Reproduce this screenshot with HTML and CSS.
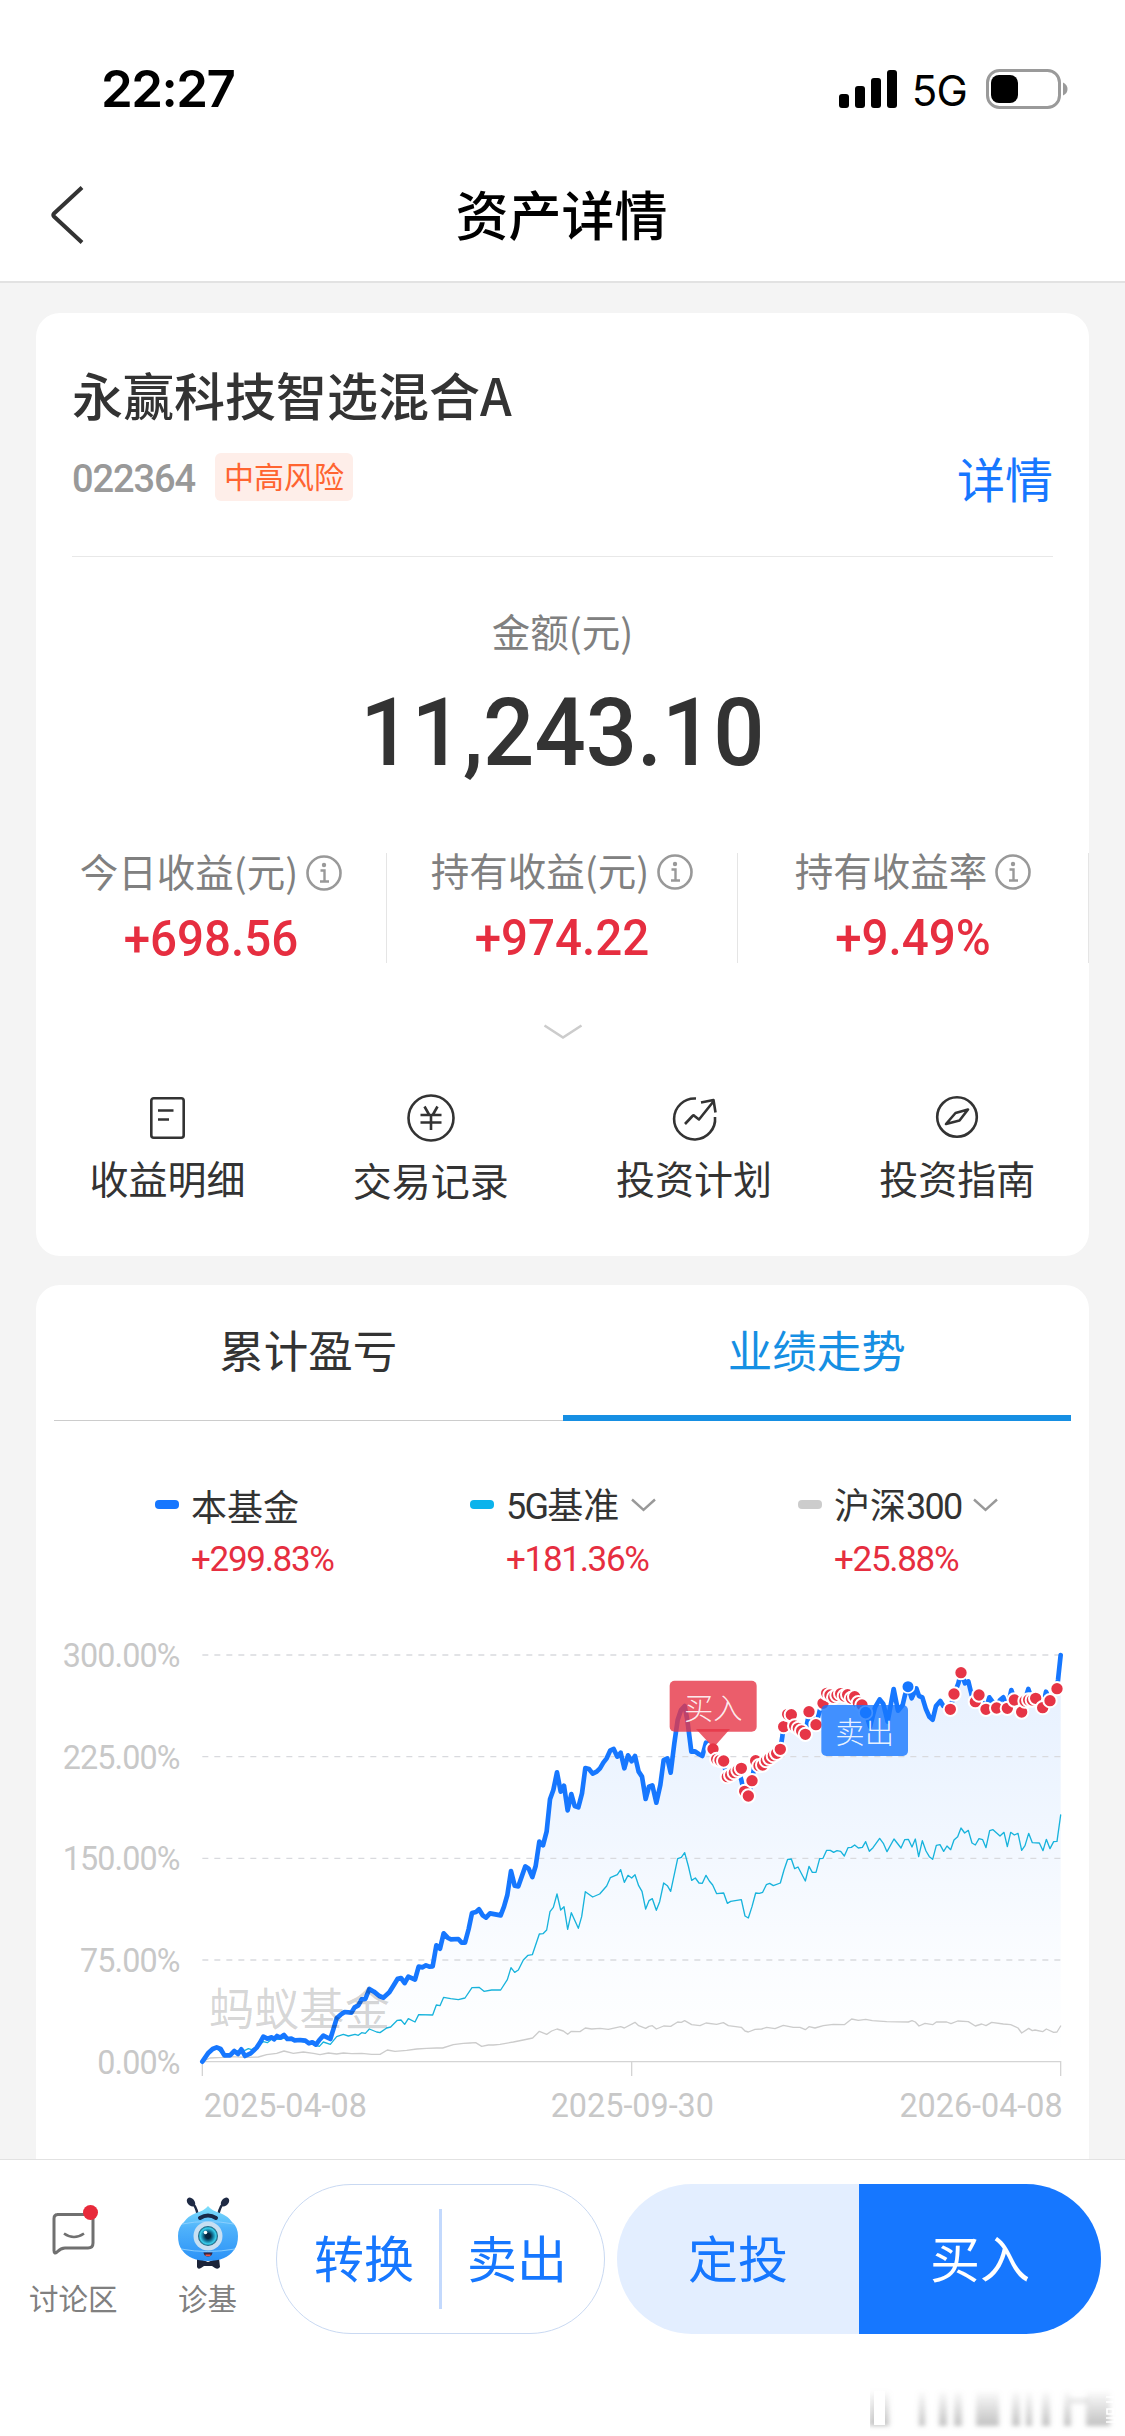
FILE: index.html
```html
<!DOCTYPE html>
<html lang="zh-CN">
<head>
	<meta charset="UTF-8">
	<title>资产详情</title>
	<link rel="stylesheet" href="styles.css">
</head>
<body>
	<div class="status">
		<span class="time">22:27</span>
		<svg class="signal" width="58" height="38" viewBox="0 0 58 38">
			<rect x="0" y="24" width="10" height="14" rx="3"/>
			<rect x="16" y="16" width="10" height="22" rx="3"/>
			<rect x="32" y="8" width="10" height="30" rx="3"/>
			<rect x="48" y="0" width="10" height="38" rx="3"/>
		</svg>
		<span class="net">5G</span>
		<svg class="battery" width="82" height="40" viewBox="0 0 82 40">
			<rect x="1.5" y="1.5" width="72" height="37" rx="12" fill="none" stroke="#9a9a9a" stroke-width="3"/>
			<rect x="5" y="6" width="27" height="28" rx="8"/>
			<path d="M77 13.500q4.500 2 4.500 6.500t-4.500 6.500z" fill="#9a9a9a"/>
		</svg>
	</div>
	<div class="nav">
		<svg class="back" width="36" height="58" viewBox="0 0 36 58"><path d="M33 1.500L5 27.500q-1.500 1.500 0 3L33 56.500" fill="none" stroke="#333" stroke-width="4"/></svg>
		<h1>资产详情</h1>
	</div>

	<div class="main">
		<div class="card asset">
			<div class="head">
				<h2>永赢科技智选混合A</h2>
				<div class="info">
					<span class="code">022364</span>
					<span class="risk">中高风险</span>
					<a class="detail">详情</a>
				</div>
			</div>
			<p class="label amount-label">金额(元)</p>
			<p class="amount">11,243.10</p>
			<div class="stats">
				<div class="stat first">
					<p class="label">今日收益(元)<svg class="tip" viewBox="0 0 36 36"><use href="#tip"/></svg></p>
					<p class="num">+698.56</p>
				</div>
				<div class="stat">
					<p class="label">持有收益(元)<svg class="tip" viewBox="0 0 36 36"><use href="#tip"/></svg></p>
					<p class="num">+974.22</p>
				</div>
				<div class="stat">
					<p class="label">持有收益率<svg class="tip" viewBox="0 0 36 36"><use href="#tip"/></svg></p>
					<p class="num">+9.49%</p>
				</div>
			</div>
			<svg class="more" width="40" height="16" viewBox="0 0 40 16"><path d="M1.500 1.500L20 13.500L38.500 1.500" fill="none" stroke="#ccc" stroke-width="2.600"/></svg>
			<div class="actions">
				<div class="action">
					<svg viewBox="0 0 48 48">
						<rect x="7.300" y="4.300" width="32.400" height="39.400" rx="2.500"/>
						<path d="M14 16.500h15.500M14 25.500h11"/>
					</svg>
					<p>收益明细</p>
				</div>
				<div class="action lower">
					<svg viewBox="0 0 48 48">
						<circle cx="24" cy="24" r="22.500"/>
						<path d="M17.500 12.500L22 20.500M30.500 12.500L26 20.500M13.500 21H34.500M13.500 28.500H34.500M24 21V36"/>
					</svg>
					<p>交易记录</p>
				</div>
				<div class="action">
					<svg viewBox="0 0 48 48">
						<path d="M26 4.500A20.500 20.500 0 1 0 45 23M15 30L22.500 22Q23.500 21 24.500 22L29 25.500L43 8M31 8.500L43.500 6L45.500 18.500"/>
					</svg>
					<p>投资计划</p>
				</div>
				<div class="action">
					<svg viewBox="0 0 48 48">
						<circle cx="24" cy="23" r="19.800"/>
						<path d="M35 15.500L22.500 19L13 30L26.500 26.500Z"/>
					</svg>
					<p>投资指南</p>
				</div>
			</div>
		</div>

		<div class="card trend">
			<div class="tabs">
				<div class="tab">累计盈亏</div>
				<div class="tab on">业绩走势</div>
			</div>
			<div class="legend">
				<div class="item fund">
					<p class="name"><i></i>本基金</p>
					<p class="rate">+299.83%</p>
				</div>
				<div class="item base">
					<p class="name"><i></i><span><b>5G</b>基准</span><svg viewBox="0 0 25 14"><path d="M1 1.500L12.500 12L24 1.500"/></svg></p>
					<p class="rate">+181.36%</p>
				</div>
				<div class="item hs">
					<p class="name"><i></i><span>沪深<b>300</b></span><svg viewBox="0 0 25 14"><path d="M1 1.500L12.500 12L24 1.500"/></svg></p>
					<p class="rate">+25.88%</p>
				</div>
			</div>
			<svg class="chart" width="1053" height="559" viewBox="-432 -60 3159 1677">
				<defs>
					<linearGradient id="fill" gradientUnits="userSpaceOnUse" x1="0" y1="105" x2="0" y2="1325">
						<stop offset="0" stop-color="#1677ff" stop-opacity=".11"/>
						<stop offset=".35" stop-color="#1677ff" stop-opacity=".07"/>
						<stop offset=".75" stop-color="#1677ff" stop-opacity=".02"/>
						<stop offset="1" stop-color="#1677ff" stop-opacity="0"/>
					</linearGradient>
				</defs>
				<path id="area" fill="url(#fill)"/>
				<path class="grid" d="M67 105H2642M67 410H2642M67 715H2642M67 1020H2642"/>
				<path class="axis" d="M67 1368V1325H2642V1368M1355 1325V1368"/>
				<g class="ytext">
					<text x="-1" y="141">300.00%</text>
					<text x="-1" y="446">225.00%</text>
					<text x="-1" y="751">150.00%</text>
					<text x="-1" y="1056">75.00%</text>
					<text x="-1" y="1361">0.00%</text>
				</g>
				<g class="xtext">
					<text x="71" y="1490">2025-04-08</text>
					<text x="1357" y="1490" text-anchor="middle">2025-09-30</text>
					<text x="2648" y="1490" text-anchor="end">2026-04-08</text>
				</g>
				<path id="hs" class="line"/>
				<path id="base" class="line"/>
				<path id="fund" class="line"/>
				<text class="mark" x="86" y="1218">蚂蚁基金</text>
				<g id="dots" transform="translate(1320 0)"></g>
				<g transform="translate(1320 0)">
					<rect class="buy" x="149" y="182" width="261" height="153" rx="15"/>
					<path class="buy" d="M228 327H330L288 374Q280 382 272 374Z"/>
					<text class="pin" x="280" y="297">买入</text>
					<rect class="sell" x="604" y="255" width="260" height="153" rx="15"/>
					<text class="pin" x="734" y="370">卖出</text>
					<circle class="sold" cx="864" cy="200" r="19"/>
				</g>
			</svg>
		</div>
	</div>

	<div class="bar">
		<div class="entry talk">
			<svg width="48" height="50" viewBox="0 0 48 50">
				<path d="M6 9.500H37Q42 9.500 42 14.500V38Q42 43 37 43H14Q10 43 6 47Q3 49.500 3 45.500V13.500Q3 9.500 7 9.500Z" fill="#fff" stroke="#707070" stroke-width="3"/>
				<path d="M13 28.500Q23 35.500 33 28.500" fill="none" stroke="#707070" stroke-width="2.600"/>
				<circle cx="39.500" cy="7.500" r="7.500" fill="#e8293a"/>
			</svg>
			<p>讨论区</p>
		</div>
		<div class="entry ant">
			<svg width="62" height="74" viewBox="0 0 62 74">
				<defs>
					<linearGradient id="skin" x1="0" y1="0" x2="0" y2="1">
						<stop offset="0" stop-color="#7fe0fb"/>
						<stop offset=".4" stop-color="#4fb2fb"/>
						<stop offset="1" stop-color="#2b92f7"/>
					</linearGradient>
					<radialGradient id="iris">
						<stop offset=".25" stop-color="#08263f"/>
						<stop offset=".5" stop-color="#137195"/>
						<stop offset=".8" stop-color="#3bd0ee"/>
						<stop offset="1" stop-color="#134a66"/>
					</radialGradient>
				</defs>
				<path d="M20.500 17Q19 9 14.500 5M41.500 17Q43 9 47.500 5" fill="none" stroke="#1f2a44" stroke-width="2.400"/>
				<ellipse cx="14" cy="5" rx="3.500" ry="5" transform="rotate(-40 14 5)" fill="#1f2a44"/>
				<ellipse cx="48" cy="5" rx="3.500" ry="5" transform="rotate(40 48 5)" fill="#1f2a44"/>
				<path d="M20 61Q24 62 31 65Q38 62 42 61L43 70Q41 73 38 71L35 69H27L24 71Q21 73 20 70Z" fill="#1b2338"/>
				<path d="M31 9Q35 14 43 16Q51 19 55 25Q61 30 61 39Q61 48 57 53Q49 64 31 64Q13 64 5 53Q1 48 1 39Q1 30 7 25Q11 19 19 16Q27 14 31 9Z" fill="url(#skin)"/>
				<path d="M5 27Q30 22 57 27M4 52Q30 57 58 52" fill="none" stroke="#8ed0ff" stroke-width=".9"/>
				<path d="M23 21Q31 16 39 21" fill="none" stroke="#182848" stroke-width="4" stroke-linecap="round"/>
				<circle cx="31" cy="39" r="14.500" fill="#c7dff2"/>
				<circle cx="31" cy="39" r="10" fill="url(#iris)"/>
				<circle cx="28.500" cy="35.500" r="1.800" fill="#fff"/>
				<path d="M26.500 55.500H35.500Q35 59.500 31 59.500T26.500 55.500Z" fill="#3a2740"/>
				<path d="M28.500 58.300h5" stroke="#f0564d" stroke-width="1.600"/>
			</svg>
			<p>诊基</p>
		</div>
		<div class="pill out"><span>转换</span><i></i><span>卖出</span></div>
		<div class="pill"><span class="plan">定投</span><span class="in">买入</span></div>
		<svg class="stamp" width="250" height="44" viewBox="0 0 250 44">
			<defs>
				<filter id="soft" x="-10%" y="-30%" width="120%" height="160%"><feGaussianBlur stdDeviation="2.500 2"/></filter>
				<linearGradient id="ink" x1="0" y1="0" x2="0" y2="1">
					<stop offset="0" stop-color="#999" stop-opacity=".05"/>
					<stop offset="1" stop-color="#999" stop-opacity=".6"/>
				</linearGradient>
			</defs>
			<g fill="url(#ink)" filter="url(#soft)">
				<rect x="-1" y="4" width="20" height="34"/>
				<rect x="49" y="4" width="6" height="34"/><rect x="69" y="4" width="8" height="34"/><rect x="84" y="4" width="8" height="34"/>
				<rect x="106" y="4" width="23" height="34"/><rect x="142" y="4" width="8" height="34"/><rect x="156" y="4" width="6" height="34"/>
				<rect x="172" y="4" width="8" height="34"/><rect x="194" y="4" width="7" height="34"/><rect x="200" y="10" width="18" height="6" fill="#999" opacity=".2"/>
				<rect x="216" y="4" width="24" height="34"/>
			</g>
			<path d="M4 3H15V37H4Z" fill="#fff"/>
			<path d="M236 9h8M236 14h7M237 21h6v5h-6zM236 34h9v-4h-9" fill="none" stroke="#fff" stroke-width="1.600"/>
		</svg>
	</div>

	<svg width="0" height="0" class="defs">
		<symbol id="tip" viewBox="0 0 36 36">
			<circle cx="18" cy="18" r="16.500" fill="none" stroke="#999" stroke-width="2.600"/>
			<circle cx="18" cy="10" r="2.200" fill="#999"/>
			<path d="M14.500 15.500H18.500V26.500M14 26.500H23" fill="none" stroke="#999" stroke-width="2.400"/>
		</symbol>
	</svg>
	<script src="chart.js"></script>
</body>
</html>
```
FILE: styles.css
```css
* {
	box-sizing: border-box;
	padding: 0;
	margin: 0;
}

body {
	width: 1125px;
	height: 2436px;
	overflow: hidden;
	background: #f4f4f4;
	color: #333;
	font-family: "Noto Sans CJK SC", sans-serif;
}

svg {
	display: block;
	flex: none;
}

.defs {
	position: absolute;
}

.status {
	display: flex;
	align-items: center;
	height: 177px;
	padding: 0 57px 0 101px;
	background: #fff;
	color: #000;
	font-family: Inter, sans-serif;
}

.time {
	flex: 1;
	font-size: 51px;
	font-weight: 600;
	letter-spacing: -1.5px;
}

.net {
	margin: 3px 19px 0 15px;
	font-size: 42px;
	font-weight: 400;
	letter-spacing: -.8px;
}

.nav {
	display: flex;
	align-items: center;
	height: 106px;
	padding: 0 51px 28px 49px;
	border-bottom: 2px solid #e2e2e2;
	background: #fff;
}

.nav h1 {
	flex: 1;
	margin: -4px 36px 0 0;
	text-align: center;
	color: #000;
	font-size: 53px;
	font-weight: 500;
}

.main {
	height: 1876px;
	padding: 30px 36px 0;
	overflow: hidden;
}

.card {
	border-radius: 24px;
	background: #fff;
}

.asset {
	height: 943px;
	padding-top: 51px;
}

.head {
	height: 193px;
	margin: 0 36px;
	border-bottom: 1px solid #e8e8e8;
}

.head h2 {
	font-size: 51px;
	font-weight: 500;
	line-height: 60px;
}

.info {
	display: flex;
	align-items: center;
	height: 48px;
	margin-top: 29px;
}

.code {
	width: 143px;
	padding-top: 3px;
	color: #999;
	font: 500 38px Roboto, sans-serif;
	letter-spacing: -1.1px;
}

.risk {
	height: 48px;
	padding: 0 9px;
	border-radius: 6px;
	background: #feeee9;
	color: #ff6430;
	font-size: 30px;
	line-height: 44px;
}

.detail {
	margin-left: auto;
	color: #1677ff;
	font-size: 48px;
	line-height: 46px;
}

.label {
	color: #808080;
	font-size: 38.5px;
}

.amount-label {
	margin-top: 48px;
	line-height: 50px;
	text-align: center;
}

.amount {
	margin-top: 28px;
	text-align: center;
	font: 500 95px/100px Roboto, sans-serif;
	transform: scaleX(.95);
}

.stats {
	display: flex;
	height: 110px;
	margin-top: 70px;
}

.stat {
	flex: 1;
	border-right: 1px solid #e5e5e5;
	text-align: center;
}

.first {
	padding-top: 1px;
}

.stat .label {
	display: flex;
	align-items: center;
	justify-content: center;
	height: 36px;
	margin-top: -2px;
	line-height: 36px;
}

.tip {
	width: 36px;
	height: 36px;
	margin: 6px 0 0 8px;
}

.num {
	margin-top: 26px;
	color: #e62e40;
	font: 500 50px/50px Roboto, sans-serif;
	transform: scaleX(.95);
}

.more {
	margin: 61px auto 0;
}

.actions {
	display: flex;
	margin-top: 54px;
}

.action {
	flex: 1;
	text-align: center;
	font-size: 39px;
	line-height: 48px;
}

.action svg {
	width: 48px;
	height: 48px;
	margin: 0 auto 11px;
	fill: none;
	stroke: #333;
	stroke-width: 2.6;
	stroke-linejoin: round;
}

.lower svg {
	margin-bottom: 13px;
}

.trend {
	height: 900px;
	margin-top: 29px;
}

.tabs {
	display: flex;
	height: 136px;
	padding: 0 18px;
}

.tab {
	flex: 1;
	border-bottom: 1px solid #ccc;
	text-align: center;
	font-size: 44.5px;
	line-height: 128px;
}

.tabs .on {
	border-bottom: 6px solid #168fe3;
	color: #168fe3;
}

.legend {
	display: flex;
	height: 94px;
	margin: 64px 0 21px;
	padding-left: 119px;
}

.fund {
	width: 315px;
}

.base {
	width: 328px;
}

.name {
	display: flex;
	align-items: center;
	height: 40px;
	font-size: 36px;
	line-height: 40px;
}

.name b {
	font: 400 36px Roboto, sans-serif;
	letter-spacing: -1.8px;
}

.name i {
	width: 24px;
	height: 9px;
	margin: -2px 12px 0 0;
	border-radius: 4px;
	background: #1677ff;
}

.base i {
	background: #0bb3ec;
}

.hs i {
	background: #ccc;
}

.name svg {
	width: 25px;
	height: 14px;
	margin-left: 12px;
	fill: none;
	stroke: #999;
	stroke-width: 2.4;
}

.rate {
	margin-top: 15px;
	padding-left: 36px;
	color: #e62e40;
	font: 400 35px/40px Roboto, sans-serif;
	letter-spacing: -1.3px;
}

.grid {
	stroke: #d9dade;
	stroke-width: 4;
	stroke-dasharray: 18 18;
}

.axis {
	fill: none;
	stroke: #d4d4d4;
	stroke-width: 4;
}

.ytext,
.xtext {
	fill: #c8c8c8;
	font: 400 97px Roboto, sans-serif;
	letter-spacing: -2.6px;
}

.ytext {
	text-anchor: end;
}

.xtext {
	letter-spacing: 0;
}

.line {
	fill: none;
	stroke: #ccc;
	stroke-width: 4;
	stroke-linejoin: round;
	stroke-linecap: round;
}

#base {
	stroke: #17b3dc;
	stroke-width: 4;
}

#fund {
	stroke: #1677ff;
	stroke-width: 14;
}

.mark {
	fill: rgba(0, 0, 0, .16);
	font-size: 136px;
	font-weight: 400;
}

.dot {
	fill: #e63546;
	stroke: #fff;
	stroke-width: 6;
}

.sold {
	fill: #1677ff;
	stroke: #fff;
	stroke-width: 5;
}

.buy {
	fill: rgba(230, 53, 70, .8);
}

.sell {
	fill: rgba(22, 119, 255, .8);
}

.pin {
	fill: rgba(255, 255, 255, .9);
	font-size: 88px;
	font-weight: 300;
	text-anchor: middle;
}

.bar {
	display: flex;
	align-items: flex-start;
	position: relative;
	height: 277px;
	padding: 24px 24px 0 29px;
	border-top: 1px solid #e2e2e2;
	background: #fff;
}

.entry {
	color: #808080;
	font-size: 29.5px;
	line-height: 40px;
}

.talk {
	width: 149px;
	padding-top: 21px;
}

.talk svg {
	margin: 0 0 22px 22px;
}

.ant {
	width: 98px;
	padding-top: 13px;
}

.ant svg {
	margin: 0 0 6px -1px;
}

.pill {
	display: flex;
	align-items: center;
	width: 484px;
	height: 150px;
	overflow: hidden;
	border-radius: 75px;
	color: #1677ff;
	font-size: 50px;
	line-height: 144px;
	text-align: center;
}

.pill span {
	flex: 1;
	height: 150px;
}

.out {
	width: 329px;
	margin-right: 12px;
	padding: 0 12px;
	border: 1px solid #c9d9f2;
}

.out i {
	width: 3px;
	height: 100px;
	background: #c3d9fd;
}

.plan {
	background: #e3eeff;
}

.in {
	background: #1677ff;
	color: #fff;
}

.stamp {
	position: absolute;
	right: 5px;
	bottom: 4px;
}
```
FILE: chart.js
```js
// each series is kept in two halves, the right one starts at x = 1320
var HALF = 1320;

var fund = [
	"67,1325 84,1300 98,1287 110,1282 122,1287 133,1306 150,1306 163,1293 174,1302 184,1288 195,1308 212,1300 230,1283 240,1268 250,1250 262,1256 275,1252 282,1258 291,1248 301,1253 312,1245 322,1257 334,1256 344,1261 360,1260 376,1262 387,1270 397,1267 408,1274 418,1260 430,1247 451,1257 460,1228 470,1195 482,1184 494,1176 514,1178 524,1162 535,1156 545,1138 556,1137 568,1107 582,1115 598,1128 610,1133 628,1117 642,1094 653,1076 663,1074 674,1089 685,1070 705,1079 716,1040 728,1042 738,1036 748,1040 758,1039 769,976 780,986 791,940 803,953 812,958 835,957 845,968 855,968 866,927 876,879 888,876 897,868 908,886 918,893 930,880 962,886 972,860 982,825 993,753 1004,797 1015,799 1025,770 1036,739 1046,746 1057,771 1067,738 1078,665 1089,676 1100,634 1110,538 1120,510 1131,457 1142,515 1152,497 1163,571 1174,522 1184,558 1195,562 1206,520 1216,444 1227,447 1238,461 1250,455 1260,445 1270,428 1280,415 1291,391 1301,387 1312,410 1322,398 1333,445 1344,406 1355,424 1365,408 1376,455 1386,470 1397,537 1407,500 1417,496 1429,548",
	"121,495 131,420 142,415 152,458 163,370 173,300 183,270 194,258 202,300 214,395 225,394 236,402 247,408 258,368 266,374 279,390 290,420 310,425 320,465 355,450 364,480 372,515 385,528 396,482 405,425 428,435 445,415 481,388 487,350 490,320 500,283 514,284 522,310 555,343 568,275 588,314 605,250 620,220 650,228 700,228 720,255 737,278 750,320 765,262 779,238 790,252 803,305 821,207 834,272 848,255 855,225 864,200 875,235 889,205 897,228 907,232 918,268 928,290 938,299 948,258 961,243 970,258 990,268 1002,223 1015,190 1023,158 1035,190 1045,184 1055,225 1065,245 1077,225 1097,268 1108,232 1130,262 1140,240 1150,232 1162,265 1174,210 1184,240 1204,278 1215,240 1225,207 1236,240 1246,234 1268,264 1278,215 1290,242 1310,206 1314,180 1322,105"
];
var base = [
	"67,1325 98,1290 110,1284 133,1308 150,1308 163,1295 184,1290 195,1291 205,1286 215,1289 230,1280 250,1265 262,1268 275,1258 301,1258 312,1254 334,1260 376,1266 397,1272 408,1276 418,1279 430,1266 451,1273 470,1250 490,1243 505,1248 525,1243 535,1246 545,1238 556,1240 568,1227 590,1236 600,1238 620,1224 632,1221 652,1201 663,1200 674,1213 685,1196 705,1206 716,1184 758,1185 769,1155 780,1157 791,1132 812,1136 835,1139 855,1134 876,1103 897,1102 912,1114 935,1110 962,1110 982,1079 993,1043 1004,1057 1015,1050 1030,1020 1044,1006 1057,1004 1078,942 1089,941 1100,930 1110,875 1120,862 1131,822 1142,870 1152,860 1163,928 1174,878 1195,925 1205,890 1216,815 1238,831 1259,822 1280,798 1291,773 1312,764 1322,749 1333,787 1344,766 1355,774 1365,764 1376,797 1386,814 1397,867 1407,842 1417,836 1429,871",
	"119,845 131,789 142,797 152,814 173,716 184,712 194,698 205,738 215,781 226,774 237,789 247,790 258,766 268,783 278,795 290,821 311,819 322,850 332,844 364,839 375,888 385,894 396,860 407,819 418,820 428,817 439,794 449,790 460,797 481,789 492,750 503,718 514,717 524,746 534,741 556,783 567,739 577,757 588,757 599,716 609,715 620,691 631,691 641,697 651,692 662,694 673,708 684,683 694,682 704,675 715,684 727,682 737,665 748,694 759,683 779,655 790,670 801,695 822,657 843,684 854,659 865,658 876,681 886,657 896,710 907,662 918,693 928,710 938,718 949,676 960,674 971,694 981,678 992,689 1002,660 1013,650 1023,624 1034,639 1045,631 1056,669 1066,675 1077,656 1088,659 1098,683 1109,632 1119,629 1140,648 1152,637 1162,680 1172,637 1183,645 1194,640 1205,691 1215,677 1226,640 1237,668 1258,669 1269,692 1279,658 1290,686 1301,665 1311,664 1322,585"
];
var hs = [
	"67,1325 90,1314 130,1312 150,1310 200,1312 235,1311 260,1304 290,1300 312,1293 340,1300 370,1296 400,1300 420,1304 445,1299 470,1302 490,1299 515,1301 545,1300 575,1303 600,1303 622,1290 645,1294 680,1291 710,1287 740,1285 770,1284 788,1284 820,1274 850,1270 870,1269 887,1268 905,1279 925,1275 940,1275 960,1273 1000,1266 1030,1260 1058,1254 1078,1234 1100,1243 1115,1233 1131,1227 1150,1233 1163,1243 1174,1234 1200,1235 1216,1224 1235,1227 1260,1225 1285,1228 1322,1220 1333,1224 1365,1207 1376,1217 1397,1225 1407,1219 1417,1217 1429,1227",
	"131,1218 152,1219 173,1206 184,1207 194,1202 215,1214 240,1217 258,1209 290,1213 310,1208 325,1217 364,1222 375,1233 385,1236 405,1228 425,1227 440,1222 465,1226 490,1216 520,1222 540,1222 556,1229 567,1220 585,1224 610,1217 640,1213 673,1214 695,1197 715,1201 737,1198 757,1202 800,1205 865,1206 876,1202 886,1206 897,1218 915,1210 938,1214 949,1206 980,1206 993,1211 1013,1203 1045,1205 1066,1218 1085,1212 1098,1217 1115,1207 1150,1212 1172,1214 1194,1224 1205,1239 1226,1225 1237,1232 1245,1230 1268,1235 1279,1227 1301,1237 1311,1236 1322,1218"
];
var buys = "279,387 290,418 300,421 311,423 322,470 332,465 343,458 354,451 364,445 374,514 385,528 396,482 407,422 417,437 428,435 439,422 449,415 460,407 470,400 481,388 491,320 503,283 514,284 524,318 535,325 545,333 556,343 567,275 588,314 609,250 620,220 630,225 641,232 651,226 662,221 673,228 683,224 694,235 704,230 715,248 726,255 991,268 1002,222 1023,158 1066,245 1077,225 1098,268 1130,264 1162,265 1183,240 1205,276 1215,243 1226,240 1237,240 1247,235 1268,263 1290,242 1311,206";
var sells = "737,278";

function line(series) {
	var right = series[1].split(" ").map(function (p) {
		var xy = p.split(",");
		return (+xy[0] + HALF) + "," + xy[1];
	});
	return "M" + series[0] + " " + right.join(" ");
}

function addDots(list, cls) {
	var dots = document.getElementById("dots");
	list.split(" ").forEach(function (p) {
		var c = document.createElementNS("http://www.w3.org/2000/svg", "circle"),
			xy = p.split(",");
		c.setAttribute("class", cls);
		c.setAttribute("cx", xy[0]);
		c.setAttribute("cy", xy[1]);
		c.setAttribute("r", 20);
		dots.appendChild(c);
	});
}

document.getElementById("fund").setAttribute("d", line(fund));
document.getElementById("base").setAttribute("d", line(base));
document.getElementById("hs").setAttribute("d", line(hs));
document.getElementById("area").setAttribute("d", line(fund) + "V1325H67Z");
addDots(buys, "dot");
addDots(sells, "sold");
```
